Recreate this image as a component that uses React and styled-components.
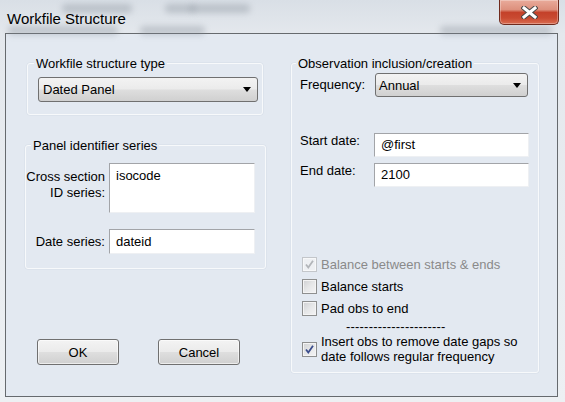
import React from "react";
import styled, { createGlobalStyle } from "styled-components";

const DIALOG_BG = "#e3e9f1";

const GlobalStyle = createGlobalStyle`
  html, body {
    margin: 0;
    padding: 0;
  }
  body {
    background: #eef1f4;
    font-family: "Liberation Sans", Arial, sans-serif;
    font-size: 13px;
    color: #000;
  }
`;

const StyledFrame = styled.div`
  position: relative;
  width: 565px;
  height: 402px;
  overflow: hidden;
  background: linear-gradient(to bottom, #d9dfe6 0, #e4e8ed 34px, #edf0f3 100%);
`;

const StyledTitleBar = styled.div`
  position: relative;
  height: 33px;
  display: flex;
  align-items: flex-start;
`;

// blurred window seen through the glass frame
const StyledBlurBlob = styled.span`
  position: absolute;
  top: ${(p) => p.$top}px;
  left: ${(p) => p.$left}px;
  width: ${(p) => p.$w}px;
  height: 9px;
  border-radius: 4px;
  background: #7d8690;
  filter: blur(3px);
  opacity: 0.35;
`;

const StyledTitle = styled.div`
  position: relative;
  margin: 10px 0 0 7px;
  font-size: 15px;
  line-height: 17px;
`;

const StyledClose = styled.div`
  position: relative;
  margin-left: auto;
  margin-right: 6px;
  width: 60px;
  height: 25px;
  box-sizing: border-box;
  border: 1px solid #6f2a1d;
  border-top: none;
  border-radius: 0 0 5px 5px;
  background: linear-gradient(
    to bottom,
    #e9ab9b 0,
    #dd907d 40%,
    #c4412a 52%,
    #c94a31 75%,
    #da6c50 100%
  );
  box-shadow: inset 0 0 0 1px rgba(255, 255, 255, 0.3);
  display: flex;
  align-items: center;
  justify-content: center;
`;

const StyledClient = styled.div`
  margin-left: 5px;
  width: 553px;
  height: 364px;
  box-sizing: border-box;
  border: 1px solid #666a6e;
  background: ${DIALOG_BG};
  display: flex;
`;

const StyledLeftColumn = styled.div`
  width: 241px;
  padding: 29px 0 0 19px;
  display: flex;
  flex-direction: column;
`;

const StyledRightColumn = styled.div`
  padding: 29px 0 0 25px;
`;

const StyledGroup = styled.div`
  position: relative;
  box-sizing: border-box;
  width: ${(p) => p.$w}px;
  height: ${(p) => p.$h}px;
  margin-left: ${(p) => p.$ml || 0}px;
  margin-top: ${(p) => p.$mt || 0}px;
  border: 1px solid #f7f9fb;
  border-radius: 3px;
  box-shadow: 0 0 0 0.5px rgba(190, 200, 212, 0.35);
`;

const StyledLegend = styled.span`
  position: absolute;
  top: -8px;
  left: ${(p) => p.$left}px;
  padding: 0 2px;
  background: ${DIALOG_BG};
  line-height: 15px;
  white-space: nowrap;
`;

const StyledGroupBody = styled.div`
  padding: ${(p) => p.$pad};
`;

const StyledSelect = styled.div`
  box-sizing: border-box;
  width: ${(p) => p.$w}px;
  height: ${(p) => p.$h}px;
  margin-left: ${(p) => p.$ml || 0}px;
  padding: 0 6px 0 ${(p) => p.$pl}px;
  display: flex;
  align-items: center;
  justify-content: space-between;
  border: 1px solid #707070;
  border-radius: 3px;
  background: linear-gradient(
    to bottom,
    #f3f3f3 0,
    #ebebeb 48%,
    #dedede 52%,
    #d0d0d0 100%
  );
`;

const StyledArrow = styled.span`
  width: 0;
  height: 0;
  border-left: 4px solid transparent;
  border-right: 4px solid transparent;
  border-top: 5px solid #000;
`;

const StyledIdGrid = styled.div`
  display: grid;
  grid-template-columns: 79px 146px;
  column-gap: 4px;
  row-gap: 16px;
  padding-top: 17px;
`;

const StyledLabel = styled.div`
  text-align: right;
  line-height: 16px;
  padding-top: ${(p) => p.$pt || 0}px;
  align-self: ${(p) => (p.$center ? "center" : "start")};
`;

const StyledField = styled.div`
  box-sizing: border-box;
  width: ${(p) => p.$w}px;
  height: ${(p) => p.$h}px;
  padding: ${(p) => (p.$multi ? "4px 0 0 6px" : "0 0 0 6px")};
  display: flex;
  align-items: ${(p) => (p.$multi ? "flex-start" : "center")};
  line-height: 16px;
  background: #fff;
  border: 1px solid;
  border-color: #a2a4a8 #eef0f3 #eef0f3 #a2a4a8;
`;

const StyledFormRow = styled.div`
  display: flex;
  align-items: center;
  margin-top: ${(p) => p.$mt}px;
`;

const StyledRowLabel = styled.div`
  width: 74px;
  line-height: 16px;
  align-self: flex-start;
  padding-top: ${(p) => p.$pt}px;
`;

const StyledChecks = styled.div`
  margin-top: 66px;
  padding-left: 2px;
`;

const StyledCheckRow = styled.div`
  display: flex;
  align-items: center;
  gap: 4px;
  min-height: 22px;
  line-height: 15px;
  color: ${(p) => (p.$disabled ? "#8a8a8a" : "#000")};
`;

const StyledBox = styled.span`
  flex: none;
  width: 15px;
  height: 15px;
  box-sizing: border-box;
  border: 1px solid ${(p) => (p.$disabled ? "#c3c6ca" : "#8e8f8f")};
  background: ${(p) =>
    p.$disabled
      ? "#eef0f3"
      : "linear-gradient(135deg, #cfd0d2 0, #e6e7e8 50%, #f4f4f5 100%)"};
  box-shadow: inset 0 0 0 1px ${(p) => (p.$disabled ? "#f7f8f9" : "#f4f4f4")};
  display: flex;
  align-items: center;
  justify-content: center;
`;

const StyledDashes = styled.div`
  margin-left: 44px;
  line-height: 15px;
  letter-spacing: 0.2px;
`;

const StyledButtons = styled.div`
  display: flex;
  gap: 39px;
  margin: 70px 0 0 12px;
`;

const StyledButton = styled.div`
  box-sizing: border-box;
  width: 82px;
  height: 26px;
  display: flex;
  align-items: center;
  justify-content: center;
  border: 1px solid #707070;
  border-radius: 3px;
  background: linear-gradient(
    to bottom,
    #f3f3f3 0,
    #ebebeb 48%,
    #dedede 52%,
    #d0d0d0 100%
  );
  box-shadow: inset 0 0 0 1px rgba(255, 255, 255, 0.6);
`;

const CloseGlyph = () => (
  <svg width="17" height="13" viewBox="0 0 17 13">
    <g strokeLinecap="square">
      <path d="M3 2 L14 11 M14 2 L3 11" stroke="#474747" strokeWidth="5" />
      <path d="M3 2 L14 11 M14 2 L3 11" stroke="#fff" strokeWidth="3" />
    </g>
  </svg>
);

const CheckMark = ({ color }) => (
  <svg width="11" height="11" viewBox="0 0 11 11">
    <path
      d="M2 5.5 L4.3 8.5 L9 1.8"
      fill="none"
      stroke={color}
      strokeWidth="1.8"
    />
  </svg>
);

const Checkbox = ({ checked, disabled, children }) => (
  <StyledCheckRow $disabled={disabled}>
    <StyledBox $disabled={disabled}>
      {checked && <CheckMark color={disabled ? "#b2b5b9" : "#3b4d8c"} />}
    </StyledBox>
    <span>{children}</span>
  </StyledCheckRow>
);

export default function App() {
  return (
    <>
      <GlobalStyle />
      <StyledFrame>
        <StyledTitleBar>
          <StyledBlurBlob $top={4} $left={62} $w={70} />
          <StyledBlurBlob $top={4} $left={165} $w={30} />
          <StyledBlurBlob $top={4} $left={190} $w={60} />
          <StyledBlurBlob $top={26} $left={8} $w={110} />
          <StyledBlurBlob $top={26} $left={140} $w={65} />
          <StyledBlurBlob $top={26} $left={440} $w={112} />
          <StyledTitle>Workfile Structure</StyledTitle>
          <StyledClose>
            <CloseGlyph />
          </StyledClose>
        </StyledTitleBar>

        <StyledClient>
          <StyledLeftColumn>
            <StyledGroup $w={236} $h={52} $ml={2}>
              <StyledLegend $left={6}>Workfile structure type</StyledLegend>
              <StyledGroupBody $pad="13px 0 0 10px">
                <StyledSelect $w={220} $h={25} $pl={4}>
                  <span>Dated Panel</span>
                  <StyledArrow />
                </StyledSelect>
              </StyledGroupBody>
            </StyledGroup>

            <StyledGroup $w={241} $h={124} $mt={30}>
              <StyledLegend $left={5}>Panel identifier series</StyledLegend>
              <StyledIdGrid>
                <StyledLabel $pt={6}>
                  Cross section
                  <br />
                  ID series:
                </StyledLabel>
                <StyledField $w={146} $h={50} $multi>
                  isocode
                </StyledField>
                <StyledLabel $center>Date series:</StyledLabel>
                <StyledField $w={146} $h={25}>
                  dateid
                </StyledField>
              </StyledIdGrid>
            </StyledGroup>

            <StyledButtons>
              <StyledButton>OK</StyledButton>
              <StyledButton>Cancel</StyledButton>
            </StyledButtons>
          </StyledLeftColumn>

          <StyledRightColumn>
            <StyledGroup $w={248} $h={310}>
              <StyledLegend $left={4}>Observation inclusion/creation</StyledLegend>
              <StyledGroupBody $pad="0 0 0 8px">
                <StyledFormRow $mt={9}>
                  <StyledRowLabel $pt={4}>Frequency:</StyledRowLabel>
                  <StyledSelect $w={153} $h={24} $ml={1} $pl={3}>
                    <span>Annual</span>
                    <StyledArrow />
                  </StyledSelect>
                </StyledFormRow>

                <StyledFormRow $mt={36}>
                  <StyledRowLabel $pt={0}>Start date:</StyledRowLabel>
                  <StyledField $w={155} $h={24}>
                    @first
                  </StyledField>
                </StyledFormRow>

                <StyledFormRow $mt={6}>
                  <StyledRowLabel $pt={0}>End date:</StyledRowLabel>
                  <StyledField $w={155} $h={24}>
                    2100
                  </StyledField>
                </StyledFormRow>

                <StyledChecks>
                  <Checkbox checked disabled>
                    Balance between starts &amp; ends
                  </Checkbox>
                  <Checkbox>Balance starts</Checkbox>
                  <Checkbox>Pad obs to end</Checkbox>
                  <StyledDashes>----------------------</StyledDashes>
                  <Checkbox checked>
                    Insert obs to remove date gaps so
                    <br />
                    date follows regular frequency
                  </Checkbox>
                </StyledChecks>
              </StyledGroupBody>
            </StyledGroup>
          </StyledRightColumn>
        </StyledClient>
      </StyledFrame>
    </>
  );
}
